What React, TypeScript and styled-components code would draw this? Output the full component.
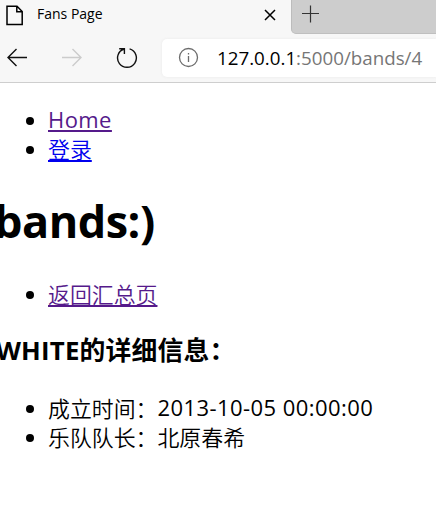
import React from "react";
import styled, { createGlobalStyle } from "styled-components";

const GlobalStyle = createGlobalStyle`
  * { box-sizing: border-box; }
  body { margin: 0; background: #fff; overflow: hidden; }
`;

const Window = styled.div`
  width: 436px;
  height: 505px;
  overflow: hidden;
  background: #fff;
  color: #000;
  font-family: "Open Sans", "Noto Sans CJK SC", sans-serif;
`;

const Chrome = styled.header`
  height: 83px;
  background: #f7f7f7;
  border-bottom: 1px solid #cecece;
`;

const TabStrip = styled.div`
  display: flex;
  height: 34px;
`;

const Tab = styled.div`
  display: flex;
  align-items: center;
  width: 291px;
  padding: 0 14px 5px 5px;
`;

const TabTitle = styled.span`
  flex: 1;
  margin: -1px 0 0 13px;
  font-size: 14px;
  line-height: 20px;
`;

const StripRest = styled.div`
  flex: 1;
  padding: 5px 0 0 10px;
  color: #333;
  background: #cdcdcd;
  border-left: 1px solid #bcbcbc;
  border-bottom: 1px solid #bfbfbf;
  border-bottom-left-radius: 5px;
`;

const Toolbar = styled.div`
  display: flex;
  align-items: center;
  height: 48px;
  padding-left: 6px;
`;

const NavButton = styled.span<{ $gap: number; $muted?: boolean }>`
  display: flex;
  width: 22px;
  height: 22px;
  margin-right: ${(p) => p.$gap}px;
  color: ${(p) => (p.$muted ? "#cccccc" : "#111")};
`;

const AddressBar = styled.div`
  display: flex;
  align-items: center;
  flex: 1;
  height: 38px;
  margin-bottom: 1px;
  padding-left: 16px;
  background: #fff;
  border-radius: 5px 0 0 5px;
  box-shadow: 0 0 3px #e9e9e9;
`;

const Url = styled.span`
  margin-left: 18px;
  color: #767676;
  font-size: 18.75px;
  line-height: 28px;
  white-space: nowrap;
`;

const Host = styled.span`
  color: #000;
`;

const Icon = styled.svg`
  display: block;
  flex: none;
  fill: none;
  stroke: currentColor;
`;

const Page = styled.main`
  padding-top: 22px;
`;

const List = styled.ul`
  margin: 0;
  padding: 0 0 0 48px;
  list-style: none;
`;

const Item = styled.li`
  display: flex;
  align-items: center;
  height: 29px;
  margin-left: -22px;
  font-size: 22px;
  line-height: 29px;
  white-space: nowrap;

  &::before {
    content: "";
    width: 8px;
    height: 8px;
    margin: 2px 14px 0 0;
    border-radius: 50%;
    background: #000;
  }
`;

const Link = styled.a<{ $visited?: boolean }>`
  color: ${(p) => (p.$visited ? "#551a8b" : "#0000ee")};
  text-decoration: underline;
  text-decoration-thickness: 2px;
  text-underline-offset: 2px;
  text-decoration-skip-ink: none;
`;

const Latin = styled.span`
  letter-spacing: 0.43px;
`;

const Cjk = styled.span`
  font-family: "Noto Sans CJK SC", sans-serif;
  font-size: 21.9px;
  font-weight: 350;
`;

const Title = styled.h1`
  height: 60px;
  margin: 28px 0 28px -6px;
  font-size: 45px;
  line-height: 60px;
  font-weight: 700;
  letter-spacing: -0.5px;
`;

const Subtitle = styled.h3`
  height: 36px;
  margin: 24px 0 25px -4px;
  font-size: 25.8px;
  line-height: 37px;
  font-weight: 700;
  letter-spacing: 0.18px;
  white-space: nowrap;
`;

export default function App() {
  return (
    <Window>
      <GlobalStyle />
      <Chrome>
        <TabStrip>
          <Tab>
            <Icon width="19" height="22" viewBox="0 0 19 22" strokeWidth="1.5">
              <path d="M2 2.2h10l5.2 5.3v13H2zM11.8 2.2v5.5h5.4" />
            </Icon>
            <TabTitle>Fans Page</TabTitle>
            <Icon width="14" height="14" viewBox="0 0 14 14" strokeWidth="1.5">
              <path d="M2 2l10 10M12 2L2 12" />
            </Icon>
          </Tab>
          <StripRest>
            <Icon width="18" height="18" viewBox="0 0 18 18" strokeWidth="1.2">
              <path d="M8.5 0.5v17M0 8.5h17" />
            </Icon>
          </StripRest>
        </TabStrip>
        <Toolbar>
          <NavButton $gap={33}>
            <Icon width="22" height="22" viewBox="0 0 22 22" strokeWidth="1.4">
              <path d="M21 10.5H2M10.5 2L2 10.5 10.5 19" />
            </Icon>
          </NavButton>
          <NavButton $gap={33} $muted>
            <Icon width="22" height="22" viewBox="0 0 22 22" strokeWidth="1.4">
              <path d="M1 10.5h19M11.5 2l8.5 8.5-8.5 8.5" />
            </Icon>
          </NavButton>
          <NavButton $gap={24}>
            <Icon width="22" height="22" viewBox="0 0 22 22" strokeWidth="1.4">
              <path d="M13.6 1.9A9.4 9.4 0 1 1 8 2M3.2 1.7h5.2v5.2" />
            </Icon>
          </NavButton>
          <AddressBar>
            <Icon width="21" height="21" viewBox="0 0 21 21" strokeWidth="1.3" color="#6c6c6c">
              <circle cx="10.5" cy="10.5" r="9" />
              <path d="M10.5 9v6M10.5 6v1.5" />
            </Icon>
            <Url>
              <Host>127.0.0.1</Host>:5000/bands/4
            </Url>
          </AddressBar>
        </Toolbar>
      </Chrome>
      <Page>
        <List>
          <Item><Link $visited><Latin>Home</Latin></Link></Item>
          <Item><Link><Cjk>登录</Cjk></Link></Item>
        </List>
        <Title>bands:)</Title>
        <List>
          <Item><Link $visited><Cjk>返回汇总页</Cjk></Link></Item>
        </List>
        <Subtitle>WHITE的详细信息：</Subtitle>
        <List>
          <Item><Cjk>成立时间：</Cjk><Latin>2013-10-05 00:00:00</Latin></Item>
          <Item><Cjk>乐队队长：北原春希</Cjk></Item>
        </List>
      </Page>
    </Window>
  );
}
